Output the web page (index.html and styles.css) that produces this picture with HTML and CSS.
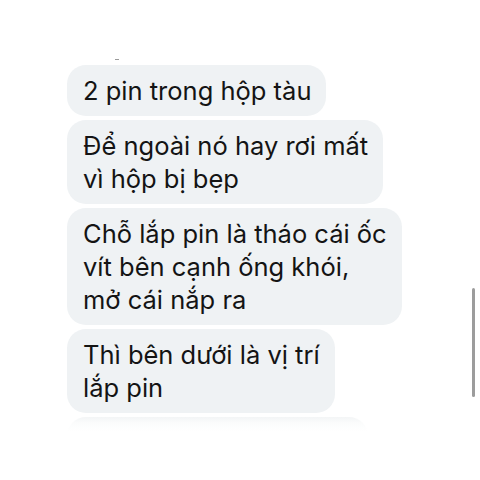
FILE: index.html
```html
<!DOCTYPE html>
<html lang="vi">
<head>
<meta charset="utf-8">
<link rel="stylesheet" href="styles.css">
</head>
<body>
<div class="thread">
  <span class="mark"></span>
  <div class="bubble">2 pin trong hộp tàu</div>
  <div class="bubble">Để ngoài nó hay rơi mất<br>vì hộp bị bẹp</div>
  <div class="bubble">Chỗ lắp pin là tháo cái ốc<br>vít bên cạnh ống khói,<br>mở cái nắp ra</div>
  <div class="bubble">Thì bên dưới là vị trí<br>lắp pin</div>
  <div class="bubble faded">Cái này để lắp thêm</div>
</div>
<div class="scrollbar"></div>
</body>
</html>
```
FILE: styles.css
```css
html, body {
  margin: 0;
  padding: 0;
  background: #ffffff;
  width: 480px;
  height: 480px;
  overflow: hidden;
}
.thread {
  position: relative;
  display: flex;
  flex-direction: column;
  align-items: flex-start;
  gap: 4px;
  padding: 65px 0 0 67px;
  font-family: Inter, "Noto Sans", sans-serif;
  font-size: 25.5px;
  line-height: 33px;
  color: #141414;
}
.mark {
  position: absolute;
  left: 115px;
  top: 59px;
  width: 4px;
  height: 1px;
  background: #9a9a9a;
}
.bubble {
  background: #eff2f4;
  border-radius: 19px;
  padding: 9px 15px 9px 16px;
}
.faded {
  color: transparent;
  background: linear-gradient(#f3f5f6 0, #fbfcfc 6px, #ffffff 14px);
  width: 270px;
}
.scrollbar {
  position: absolute;
  left: 472px;
  top: 288px;
  width: 3px;
  height: 109px;
  border-radius: 2px;
  background: #9c9c9c;
}
```
